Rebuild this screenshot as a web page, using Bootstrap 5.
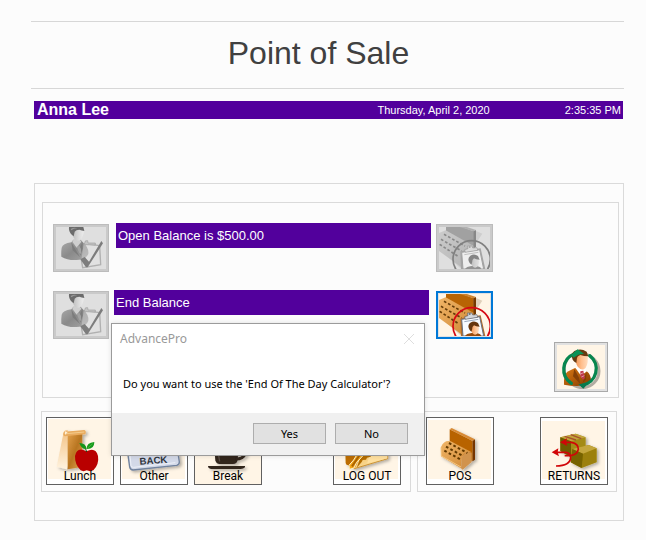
<!DOCTYPE html>
<html lang="en">
<head>
<meta charset="utf-8">
<meta name="viewport" content="width=device-width, initial-scale=1">
<title>Point of Sale</title>
<link href="https://cdn.jsdelivr.net/npm/bootstrap@5.3.0/dist/css/bootstrap.min.css" rel="stylesheet">
<style>
  body { background: #fcfcfc; font-family: "Liberation Sans", Arial, sans-serif; color: #000; }
  .page { padding: 21px 22px 19px 31px; }
  .page-title { border-top: 1px solid #d7d7d7; border-bottom: 1px solid #d7d7d7; color: #404040; font-size: 32px; line-height: 40px; padding: 11px 18px 15px 0; }
  .purple { background: #52009c; color: #fff; }
  .user-bar { margin: 12px 1px 0 3px; padding: 0 2px 0 3px; height: 18px; line-height: 18px; font-size: 11px; }
  .user-name { font-size: 16px; }
  .user-date { margin-right: 75px; font-size: 11px; }
  .frame { border: 1px solid #dadada; }
  .desk { margin: 64px 0 0 3px; padding: 18px 4px 28px 6px; }
  .balances { margin-left: 1px; padding: 20px 10px 5px 10px; }
  .balance-row { padding-right: 115px; margin-bottom: 18px; }
  .balance-row + .balance-row { margin-bottom: 3px; }
  .balance-text { height: 25px; line-height: 25px; padding-left: 2px; font-size: 13px; margin: 0 5px 0 7px; }
  .balance-text.end-text { margin: 0 7px 0 5px; }
  .pic-btn { border: 1px solid #a9a9a9; background: #e1e1e1; padding: 2px; width: 57px; height: 48px; margin-top: 1px; flex: none; }
  .pic-btn svg, .tile svg { display: block; width: 100%; height: 100%; }
  .pic-btn.person { width: 56px; }
  .pic-btn:disabled { border-color: #bcbcbc; background: #cacaca; }
  .pic-btn:disabled svg { background: #dfdfdf; }
  .pic-btn .dimmed { filter: grayscale(1); opacity: .55; }
  .pic-btn.current { border: 2px solid #0078d7; padding: 1px; }
  .pic-btn.agent { width: 54px; height: 50px; margin: 0; }
  .tiles { display: grid; grid-template-columns: 370fr 200fr; margin: 13px 2px 0 0; gap: 6px; }
  .tile-group { padding: 5px 9px 6px 4px; gap: 6px; min-width: 0; }
  .group-b { padding-left: 8px; padding-right: 8px; }
  .tile { position: relative; width: 68px; height: 68px; border: 1px solid #606060; background: #fff; padding: 0; flex: none; }
  .tile span { position: absolute; left: 0; right: 0; bottom: 0; font: 12px/15px Roboto, "Liberation Sans", sans-serif; text-align: center; color: #000; }
  .msg { position: absolute; left: 76px; top: 139px; width: 314px; border: 1px solid #9b9b9b; background: #fff; font-family: "Noto Sans", "Open Sans", sans-serif; font-size: 11px; box-shadow: 0 0 5px rgba(0,0,0,.12); }
  .msg-head { height: 30px; padding: 0 10px 0 8px; color: #999; font-size: 12px; }
  .msg-close { border: 0; background: none; padding: 0; width: 10px; height: 10px; }
  .msg-close svg { display: block; }
  .msg-text { padding: 21px 11px 20px; line-height: 18px; margin: 0; }
  .msg-foot { background: #f0f0f0; padding: 10px 16px 11px; gap: 9px; }
  .msg-foot button { width: 73px; height: 21px; border: 1px solid #adadad; background: #e1e1e1; line-height: 19px; padding: 0; color: #000; }
</style>
<script src="https://cdn.jsdelivr.net/npm/bootstrap@5.3.0/dist/js/bootstrap.bundle.min.js"></script>
</head>
<body>
<svg width="0" height="0" class="position-absolute" aria-hidden="true">
  <defs>
    <linearGradient id="suitGray" x1="0" y1="0" x2="1" y2="1"><stop offset="0" stop-color="#ababab"/><stop offset=".5" stop-color="#8a8a8a"/><stop offset="1" stop-color="#a5a5a5"/></linearGradient>
    <linearGradient id="faceGray" x1="0" y1="0" x2="1" y2="0"><stop offset="0" stop-color="#bcbcbc"/><stop offset=".6" stop-color="#dcdcdc"/><stop offset="1" stop-color="#ececec"/></linearGradient>
    <linearGradient id="skin" x1="0" y1="0" x2="1" y2="0"><stop offset="0" stop-color="#f0904c"/><stop offset=".5" stop-color="#ffbe8c"/><stop offset="1" stop-color="#ffddc0"/></linearGradient>
    <linearGradient id="suit" x1="0" y1="0" x2="1" y2="1"><stop offset="0" stop-color="#d87818"/><stop offset=".5" stop-color="#b05a08"/><stop offset="1" stop-color="#803c00"/></linearGradient>
    <linearGradient id="tan" x1="0" y1="0" x2="1" y2="1"><stop offset="0" stop-color="#f0b567"/><stop offset="1" stop-color="#cf8734"/></linearGradient>
    <linearGradient id="bagFront" x1="0" y1="0" x2="1" y2="1"><stop offset="0" stop-color="#e2a04b"/><stop offset=".5" stop-color="#b87521"/><stop offset="1" stop-color="#e0a554"/></linearGradient>
    <linearGradient id="bagSide" x1="0" y1="0" x2="0" y2="1"><stop offset="0" stop-color="#f3c183"/><stop offset="1" stop-color="#fff3df"/></linearGradient>
    <linearGradient id="gold" x1="0" y1="0" x2="1" y2="1"><stop offset="0" stop-color="#eda32a"/><stop offset="1" stop-color="#fff0c0"/></linearGradient>
    <filter id="soft" x="-30%" y="-30%" width="160%" height="160%"><feDropShadow dx="6" dy="5" stdDeviation="5" flood-color="#000" flood-opacity=".3"/></filter>
    <symbol id="personCheck" viewBox="0 0 150 126">
      <path d="M46 46Q20 50 17 62Q15 75 16 89Q40 103 70 98Q92 96 97 80Q99 62 82 47L74 38H52Z" fill="url(#suitGray)"/>
      <path d="M49 44L62 62L76 44L70 36H54Z" fill="#cfcfcf"/>
      <path d="M46 46L54 60L72 90L50 70Z M79 46L80 66L73 86L70 66Z" fill="#7c7c7c"/>
      <path d="M62 60L70 56L75 66L76 82L70 78Z" fill="#a2a2a2"/>
      <path d="M49 10Q48 34 62 41Q74 44 80 28Q86 14 81 4H52Z" fill="url(#faceGray)"/>
      <path d="M39 0H82L85 12Q77 11 70 8Q60 8 56 14L53 28L48 24Q37 14 39 0Z" fill="#6b6b6b"/>
      <path d="M44 6Q54 0 64 4Q53 4 46 10Z" fill="#989898"/>
      <path d="M83 50L131 56L134 113L80 122L76 98" fill="#e3e3e3" fill-opacity=".4" stroke="#b0b0b0" stroke-width="4"/>
      <path d="M86 48Q86 39 95 41L96 48L118 48V54L85 53Z" fill="#c4c4c4" stroke="#a0a0a0" stroke-width="2"/>
      <path d="M73 97L86 90L99 104L136 42L141 49L95 121L90 121Z" fill="#7d7d7d"/>
    </symbol>
    <symbol id="registerBadge" viewBox="0 0 153 126">
      <path d="M0 65L66 125H84L110 50L130 20L111 12V50Z" fill="#65420e" opacity=".2"/>
      <path d="M21 0H70L104 13V68L60 50L21 16Z" fill="#b86404"/>
      <path d="M103 12L111 9V60L103 66Z" fill="#743800"/>
      <path d="M62 0H84L111 9L103 13Z" fill="#cd8430"/>
      <path d="M0 18L20 10L103 56V90L76 122L66 120L0 72Z" fill="url(#tan)"/>
      <path d="M66 84L76 68Q88 56 103 60V90L76 120H66Z" fill="#c6823b"/>
      <g stroke="#643b08" stroke-width="5" stroke-dasharray="8 6"><path d="M15 22L78 57M6 37L68 72M2 52L57 88"/></g>
      <circle cx="98" cy="97" r="56" fill="none" stroke="#d50813" stroke-width="5"/>
      <path d="M64 73L125 64L139 126H66Z" fill="#b06b2a"/>
      <path d="M68 76L122 68L134 126H72Z" fill="#f8fbff" stroke="#677181" stroke-width="3"/>
      <path d="M77 68L87 65L85 57H99L101 63L114 62L116 70L79 76Z" fill="#d4d7dc" stroke="#65676d" stroke-width="2"/>
      <circle cx="92" cy="60" r="3" fill="#707070"/>
      <path d="M76 83L118 76" stroke="#9aa7bb" stroke-width="3"/>
      <path d="M78 126Q82 119 98 117L116 118Q126 120 127 126Z" fill="#984a0c"/>
      <path d="M95 98Q95 114 104 121Q112 125 118 115Q122 104 118 94L104 88Z" fill="url(#skin)"/>
      <path d="M89 102Q86 92 94 86Q106 78 117 87L122 98Q110 98 105 94Q99 98 99 108L97 113Q91 109 89 102Z" fill="#67350d"/>
    </symbol>
  </defs>
</svg>

<main class="page">
  <h1 class="page-title text-center fw-normal m-0">Point of Sale</h1>

  <div class="user-bar purple d-flex">
    <strong class="user-name me-auto">Anna Lee</strong>
    <span class="user-date">Thursday, April 2, 2020</span>
    <span>2:35:35 PM</span>
  </div>

  <section class="desk frame position-relative">
    <div class="balances frame">
      <div class="balance-row d-flex align-items-start">
        <button class="pic-btn person" disabled aria-label="Confirm open balance"><svg aria-hidden="true"><use href="#personCheck"/></svg></button>
        <div class="balance-text purple flex-grow-1">Open Balance is $500.00</div>
        <button class="pic-btn" disabled aria-label="Count open balance"><svg aria-hidden="true"><use class="dimmed" href="#registerBadge"/></svg></button>
      </div>
      <div class="balance-row d-flex align-items-start">
        <button class="pic-btn person" disabled aria-label="Confirm end balance"><svg aria-hidden="true"><use href="#personCheck"/></svg></button>
        <div class="balance-text end-text purple flex-grow-1">End Balance</div>
        <button class="pic-btn current" aria-label="Count end balance"><svg aria-hidden="true"><rect width="100%" height="100%" fill="#fff5e6"/><use href="#registerBadge"/></svg></button>
      </div>
      <div class="d-flex justify-content-end">
        <button class="pic-btn agent" aria-label="Switch user">
          <svg viewBox="0 0 144 132" preserveAspectRatio="none" aria-hidden="true">
            <rect width="144" height="132" fill="#fff5e6"/>
            <circle cx="76" cy="78" r="50" fill="none" stroke="#000" stroke-opacity=".3" stroke-width="9"/>
            <circle cx="72" cy="72" r="46" fill="#fffaf2"/>
            <path d="M21 119Q19 91 31 80L54 69L72 76L91 80Q101 88 102 106L88 120Q58 127 21 119Z" fill="url(#suit)"/>
            <path d="M56 70L72 92L88 80L84 70L66 64Z" fill="#fff"/>
            <path d="M52 72L66 98L70 117L48 94Z M89 83L87 104L77 115L82 94Z" fill="#854006"/>
            <path d="M70 79L79 77L84 99L78 104L70 94Z" fill="#c03a4c"/>
            <path d="M70 87L80 83M73 96L82 92" stroke="#efc1c8" stroke-width="2"/>
            <path d="M98 32A50 50 0 0 1 76 121M43 115A50 50 0 0 1 51 27" fill="none" stroke="#07864f" stroke-width="10" stroke-linecap="round"/>
            <path d="M54 27Q54 54 63 66Q76 80 86 68Q95 54 92 27L75 20Z" fill="url(#skin)"/>
            <path d="M47 44Q40 27 52 18Q71 8 89 20L94 34Q80 34 70 30Q61 33 60 39L58 54Q50 50 47 44Z" fill="#673a10"/>
            <path d="M43 31Q51 20 62 13L81 26L64 29L50 38Z" fill="#0a9257"/>
            <path d="M96 112L79 131L64 118L86 115Z" fill="#08794e"/>
          </svg>
        </button>
      </div>
    </div>

    <div class="tiles">
      <div class="tile-group frame d-flex">
        <button class="tile">
          <svg viewBox="0 0 198 198" aria-hidden="true">
            <rect x="3" y="3" width="189" height="180" fill="#fff5e6"/>
            <g filter="url(#soft)">
              <path d="M50 42Q52 36 62 36L63 144L59 154L29 146Z" fill="url(#bagSide)"/>
              <path d="M62 50L106 46V147L62 154Z" fill="url(#bagFront)"/>
              <path d="M52 41L112 36Q119 38 115 49L53 55Q45 49 52 41Z" fill="#e9ab5e"/>
              <path d="M55 40L62 44L56 50Q51 48 55 40Z" fill="#fff0d8"/>
              <path d="M58 47L112 42" stroke="#f4cc8d" stroke-width="3"/>
            </g>
            <path d="M118 100Q90 84 84 114Q83 139 101 157Q109 162 119 157Q130 162 139 157Q157 139 153 114Q146 85 118 100Z" fill="#b90000"/>
            <path d="M119 102Q117 93 111 83" fill="none" stroke="#154d17" stroke-width="3"/>
            <path d="M97 75Q117 75 119 93Q104 95 97 75Z" fill="#15951a"/>
            <path d="M119 93Q118 74 142 72Q142 94 119 93Z" fill="#169a1c"/>
            <path d="M121 91L137 77" stroke="#5cc048" stroke-width="2"/>
          </svg><span>Lunch</span>
        </button>
        <button class="tile">
          <svg viewBox="0 0 198 198" aria-hidden="true">
            <rect x="3" y="3" width="189" height="180" fill="#fff5e6"/>
            <g filter="url(#soft)"><path d="M23 73L157 67Q164 67 166 73L175 132Q175 140 167 142L36 156Q28 155 26 147L17 82Q16 75 23 73Z" fill="#d3d9e8" stroke="#70829e" stroke-width="4"/></g>
            <path d="M24 78L30 143Q31 148 38 148L163 134" fill="none" stroke="#edf1f9" stroke-width="3"/>
            <text x="101" y="103" text-anchor="middle" transform="rotate(-4 101 103)" font-family="Liberation Sans, sans-serif" font-size="30" font-weight="bold" fill="#303640">BE</text>
            <text x="98" y="137" text-anchor="middle" transform="rotate(-4 98 137)" font-family="Liberation Sans, sans-serif" font-size="29" font-weight="bold" fill="#303640">BACK</text>
          </svg><span>Other</span>
        </button>
        <button class="tile">
          <svg viewBox="0 0 198 198" aria-hidden="true">
            <rect width="198" height="198" fill="#fff5e6"/>
            <g filter="url(#soft)">
              <path d="M56 70H132L128 125Q126 138 114 138H74Q63 138 61 127Z" fill="#30251e"/>
              <path d="M127 85Q154 84 150 108Q145 123 122 123" fill="none" stroke="#30251e" stroke-width="9"/>
              <path d="M39 144H150V148Q145 153 137 153H48Q39 151 39 144Z" fill="#30251e"/>
            </g>
            <path d="M69 82Q68 108 74 130" stroke="#594c44" stroke-width="4" fill="none"/>
          </svg><span>Break</span>
        </button>
        <button class="tile ms-auto">
          <svg viewBox="0 0 198 198" aria-hidden="true">
            <rect x="3" y="3" width="189" height="180" fill="#fff5e6"/>
            <g filter="url(#soft)">
              <path d="M35 72L160 62L161 122L61 152L36 136Z" fill="url(#gold)" stroke="#ba7300" stroke-width="2"/>
              <path d="M35 90L85 102L62 151L36 139Z" fill="#bd6d00"/>
            </g>
            <path d="M106 112L160 103V121L100 136Z" fill="#ffe0a0"/>
            <path d="M84 104L118 100L110 116L99 119L96 125L86 126L83 132L68 150Z" fill="#b46d00"/>
            <path d="M76 98L94 105L67 135L60 150L46 154L45 142L59 126Z" fill="#f3a516" stroke="#fff4cf" stroke-width="3"/>
            <path d="M77 111L54 145" stroke="#ab6200" stroke-width="6"/>
          </svg><span>LOG OUT</span>
        </button>
      </div>
      <div class="tile-group group-b frame d-flex justify-content-between">
        <button class="tile">
          <svg viewBox="0 0 198 198" aria-hidden="true">
            <rect x="3" y="6" width="189" height="177" fill="#fff5e6"/>
            <g filter="url(#soft)">
              <path d="M68 34L137 69V130L68 95Z" fill="#b86402"/>
              <path d="M68 34L74 30L144 64L137 69Z" fill="#d78a35"/>
              <path d="M137 69L144 64V125L137 130Z" fill="#743600"/>
              <path d="M42 87Q52 65 71 70L134 103Q112 99 105 117L102 151L42 115Z" fill="url(#tan)"/>
              <path d="M105 117Q113 97 134 104V132L107 155L102 151Z" fill="#d1934d"/>
              <path d="M42 88L43 114L102 147" fill="none" stroke="#f4c580" stroke-width="3"/>
            </g>
            <g stroke="#613900" stroke-width="6" stroke-dasharray="8 7"><path d="M66 75L121 105M57 86L108 114M52 98L102 125"/></g>
          </svg><span>POS</span>
        </button>
        <button class="tile">
          <svg viewBox="0 0 198 198" aria-hidden="true">
            <rect x="3" y="9" width="189" height="174" fill="#fff5e6"/>
            <g filter="url(#soft)">
              <path d="M58 58L104 47L134 58V104L91 118L58 99Z" fill="#a48b15"/>
              <path d="M58 58L104 47L134 58L90 70Z" fill="#c4a63c"/>
              <path d="M58 58L90 70V118L58 99Z" fill="#6d5c00"/>
              <path d="M94 93L143 81L167 91V133L122 150L89 133Z" fill="#9c800a"/>
              <path d="M94 93L143 81L167 91L126 107Z" fill="#c4a63c"/>
              <path d="M94 93L126 107L122 150L89 133Z" fill="#786300"/>
            </g>
            <path d="M71 55L105 66M89 50L121 62" stroke="#a6532b" stroke-width="4"/>
            <path d="M69 73H91Q113 77 112 94Q108 113 81 113H71" fill="none" stroke="#d10508" stroke-width="5"/>
            <path d="M57 73L78 61L75 73L79 84Z M32 103L52 91L50 103L54 115Z" fill="#d10508"/>
            <path d="M48 103H75Q90 106 89 119Q87 144 45 144" fill="none" stroke="#d10508" stroke-width="5"/>
          </svg><span>RETURNS</span>
        </button>
      </div>
    </div>

    <div class="msg" role="dialog" aria-labelledby="msgTitle" aria-describedby="msgText">
      <div class="msg-head d-flex align-items-center justify-content-between">
        <span id="msgTitle">AdvancePro</span>
        <button class="msg-close" aria-label="Close"><svg viewBox="0 0 10 10" width="10" height="10" aria-hidden="true"><path d="M0 0L10 10M10 0L0 10" stroke="#dedede"/></svg></button>
      </div>
      <p class="msg-text" id="msgText">Do you want to use the 'End Of The Day Calculator'?</p>
      <div class="msg-foot d-flex justify-content-end">
        <button>Yes</button>
        <button>No</button>
      </div>
    </div>
  </section>
</main>
</body>
</html>
